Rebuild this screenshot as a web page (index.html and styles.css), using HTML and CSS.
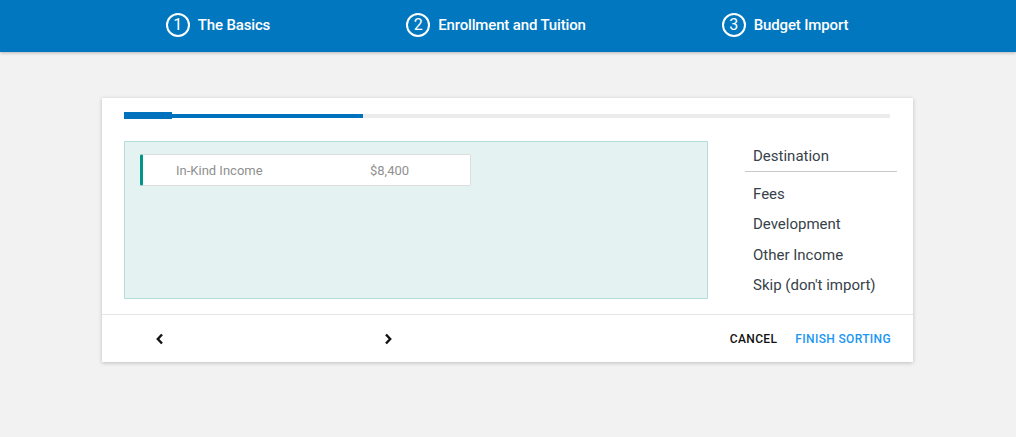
FILE: index.html
```html
<!DOCTYPE html>
<html>
<head>
<meta charset="utf-8">
<link rel="stylesheet" href="styles.css">
</head>
<body>
<header class="topbar">
  <nav class="steps">
    <div class="step"><span class="step-num">1</span><span class="step-label">The Basics</span></div>
    <div class="step"><span class="step-num">2</span><span class="step-label">Enrollment and Tuition</span></div>
    <div class="step"><span class="step-num">3</span><span class="step-label">Budget Import</span></div>
  </nav>
</header>
<main class="main">
  <section class="card">
    <div class="progress">
      <div class="progress-fill"></div>
      <div class="progress-chunk"></div>
    </div>
    <div class="content">
      <div class="dropzone">
        <div class="item">
          <span class="item-label">In-Kind Income</span>
          <span class="item-amount">$8,400</span>
        </div>
      </div>
      <div class="dest">
        <div class="dest-title">Destination</div>
        <ul class="dest-list">
          <li>Fees</li>
          <li>Development</li>
          <li>Other Income</li>
          <li>Skip (don't import)</li>
        </ul>
      </div>
    </div>
    <footer class="card-footer">
      <div class="pager">
        <button class="icon-btn" aria-label="Previous">
          <svg width="10" height="12" viewBox="0 0 10 12"><path d="M7 1.5 L2.8 6 L7 10.5" fill="none" stroke="#111" stroke-width="2.4"/></svg>
        </button>
        <button class="icon-btn" aria-label="Next">
          <svg width="10" height="12" viewBox="0 0 10 12"><path d="M3 1.5 L7.2 6 L3 10.5" fill="none" stroke="#111" stroke-width="2.4"/></svg>
        </button>
      </div>
      <div class="actions">
        <button class="text-btn cancel">CANCEL</button>
        <button class="text-btn finish">FINISH SORTING</button>
      </div>
    </footer>
  </section>
</main>
</body>
</html>
```

FILE: styles.css
```css
* { box-sizing: border-box; }
html, body { margin: 0; padding: 0; }
body {
  background: #f2f2f2;
  font-family: Roboto, "Liberation Sans", Arial, sans-serif;
  width: 1016px;
  height: 437px;
  overflow: hidden;
}
.topbar {
  height: 52px;
  background: #0177bf;
  box-shadow: 0 1px 3px rgba(0,0,0,0.25);
  position: relative;
  z-index: 1;
}
.steps {
  display: flex;
  justify-content: center;
  align-items: center;
  gap: 136px;
  height: 50px;
  padding-right: 2px;
}
.step {
  display: flex;
  align-items: center;
  gap: 8px;
  color: #fff;
}
.step-num {
  width: 24px;
  height: 24px;
  border: 2px solid #fff;
  border-radius: 50%;
  display: flex;
  align-items: center;
  justify-content: center;
  font-size: 16px;
  font-weight: 400;
  line-height: 1;
}
.step-label {
  font-size: 15px;
  font-weight: 500;
  letter-spacing: -0.15px;
}
.main {
  padding-top: 46px;
  padding-left: 102px;
}
.card {
  width: 811px;
  height: 264px;
  background: #fff;
  box-shadow: 0 1px 4px rgba(0,0,0,0.22);
  display: flex;
  flex-direction: column;
}
.progress {
  position: relative;
  margin: 16px 23px 0 22px;
  height: 4px;
  background: #ececec;
}
.progress-fill {
  width: 239px;
  height: 4px;
  background: #0071bc;
}
.progress-chunk {
  position: absolute;
  left: 0;
  top: -2px;
  width: 48px;
  height: 7px;
  background: #0071bc;
}
.content {
  display: flex;
  margin-top: 23px;
  padding: 0 16px 0 22px;
  gap: 37px;
  height: 158px;
}
.dropzone {
  width: 584px;
  height: 158px;
  background: #e4f2f2;
  border: 1px solid #b4dcd8;
  padding: 12px 0 0 15px;
}
.item {
  width: 331px;
  height: 32px;
  background: #fff;
  border: 1px solid #dcdcdc;
  border-left: 3px solid #00968a;
  border-radius: 2px;
  display: flex;
  align-items: center;
  padding-left: 33px;
  padding-top: 1px;
  font-size: 13px;
  color: #909090;
}
.item-label { width: 194px; }
.dest {
  width: 152px;
}
.dest-title {
  margin-top: 5px;
  padding: 0 8px 5px;
  line-height: 20px;
  font-size: 15px;
  color: #37424a;
  border-bottom: 1px solid #c8c8c8;
}
.dest-list {
  list-style: none;
  margin: 7px 0 0;
  padding: 0;
}
.dest-list li {
  padding: 0 8px;
  line-height: 30.4px;
  font-size: 15px;
  color: #37424a;
  white-space: nowrap;
}
.card-footer {
  margin-top: 15px;
  border-top: 1px solid #e4e4e4;
  height: 48px;
  display: flex;
  align-items: center;
  justify-content: space-between;
  padding: 0 22px 0 40px;
}
.pager {
  display: flex;
  gap: 192px;
}
.icon-btn {
  width: 36px;
  height: 36px;
  border: none;
  background: transparent;
  padding: 0;
  display: flex;
  align-items: center;
  justify-content: center;
}
.actions {
  display: flex;
  gap: 18px;
  align-items: center;
}
.text-btn {
  border: none;
  background: transparent;
  padding: 0;
  font-family: Roboto, "Liberation Sans", Arial, sans-serif;
  font-size: 12px;
  font-weight: 500;
  letter-spacing: 0.35px;
}
.cancel { color: #111; }
.finish { color: #2196f3; }
```
